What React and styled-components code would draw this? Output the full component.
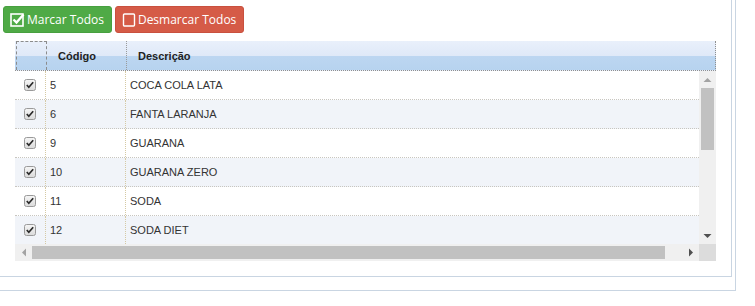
import React from "react";
import styled, { createGlobalStyle } from "styled-components";

const Global = createGlobalStyle`
  html, body { margin: 0; padding: 0; background: #fff; }
  body { font-family: Arial, "Liberation Sans", sans-serif; }
`;

const Outer = styled.div`
  width: 736px;
  height: 291px;
  border-right: 1px solid #c9d5e2;
  border-bottom: 1px solid #c9d5e2;
  box-sizing: border-box;
`;

const Inner = styled.div`
  width: 732px;
  height: 277px;
  border-right: 1px solid #c9d5e2;
  border-bottom: 1px solid #c9d5e2;
  box-sizing: border-box;
  padding: 6px 0 0 3px;
`;

const Toolbar = styled.div`
  display: flex;
  gap: 3px;
  height: 27px;
`;

const Btn = styled.button`
  display: flex;
  align-items: center;
  gap: 2px;
  height: 27px;
  padding: 0 7px 0 6px;
  border: 1px solid ${(p) => p.$border};
  background: ${(p) => p.$bg};
  color: #fff;
  border-radius: 3px;
  font-family: "Open Sans", "Liberation Sans", sans-serif;
  font-size: 12px;
  cursor: pointer;
`;

const Grid = styled.div`
  margin: 8px 0 0 12px;
  width: 701px;
  display: flex;
  flex-direction: column;
`;

const HeaderRow = styled.div`
  display: flex;
  height: 30px;
  box-sizing: border-box;
  border-bottom: 1px dotted #8f8f8f;
  border-right: 1px dotted #8f8f8f;
  background: linear-gradient(#e9f0fb 0%, #dfe9f8 50%, #bcd6f1 53%, #b7d3ef 100%);
`;

const HeadCell = styled.div`
  width: ${(p) => p.$w};
  flex: ${(p) => (p.$grow ? 1 : "none")};
  box-sizing: border-box;
  display: flex;
  align-items: center;
  padding-left: 11px;
  font-size: 11px;
  font-weight: bold;
  color: #222;
  border-right: ${(p) => (p.$sep ? "1px dotted #9a9a9a" : "none")};
`;

const FocusCell = styled.div`
  width: 31px;
  box-sizing: border-box;
  margin-left: 1px;
  border: 1px dashed #8c8c8c;
  border-bottom: none;
`;

const BodyWrap = styled.div`
  display: flex;
  height: 173px;
`;

const Rows = styled.div`
  flex: 1;
  overflow: hidden;
`;

const Row = styled.div`
  display: flex;
  height: 29px;
  box-sizing: border-box;
  border-bottom: 1px dotted #c8c6c0;
  background: ${(p) => (p.$alt ? "#f1f4f9" : "#fff")};
`;

const Cell = styled.div`
  width: ${(p) => p.$w};
  flex: ${(p) => (p.$grow ? 1 : "none")};
  box-sizing: border-box;
  display: flex;
  align-items: center;
  justify-content: ${(p) => (p.$center ? "center" : "flex-start")};
  padding-left: ${(p) => (p.$center ? "0" : "4px")};
  font-size: 11px;
  color: #333;
  border-right: ${(p) => (p.$sep ? "1px dotted #d5c9a4" : "none")};
`;

const VScroll = styled.div`
  width: 17px;
  background: #f0f0f0;
  display: flex;
  flex-direction: column;
  align-items: center;
`;

const ArrowBtn = styled.div`
  width: 17px;
  height: 17px;
  flex: none;
  display: flex;
  align-items: center;
  justify-content: center;
`;

const VThumb = styled.div`
  width: 13px;
  height: 62px;
  background: #c1c1c1;
`;

const Spacer = styled.div`
  flex: 1;
`;

const HScrollRow = styled.div`
  display: flex;
  height: 17px;
`;

const HTrack = styled.div`
  flex: 1;
  display: flex;
  align-items: center;
  background: #f0f0f0;
`;

const HThumb = styled.div`
  width: 633px;
  height: 13px;
  background: #c1c1c1;
`;

const Corner = styled.div`
  width: 17px;
  background: #dcdcdc;
`;

const CheckSquareIcon = () => (
  <svg width="15" height="15" viewBox="0 0 15 15">
    <rect x="1" y="2" width="12" height="12" fill="none" stroke="#fff" strokeWidth="1.6" />
    <path d="M3.5 7.5 L6.5 10.5 L13.5 2.5" fill="none" stroke="#fff" strokeWidth="2.4" />
  </svg>
);

const SquareIcon = () => (
  <svg width="14" height="15" viewBox="0 0 14 15">
    <rect x="1.5" y="2" width="11" height="12" rx="1" fill="none" stroke="#fff" strokeWidth="1.4" />
  </svg>
);

const RowCheck = () => (
  <svg width="12" height="12" viewBox="0 0 12 12">
    <defs>
      <linearGradient id="cbg" x1="0" y1="0" x2="0" y2="1">
        <stop offset="0" stopColor="#f6f6f6" />
        <stop offset="1" stopColor="#dadada" />
      </linearGradient>
    </defs>
    <rect x="0.5" y="0.5" width="11" height="11" rx="2" fill="url(#cbg)" stroke="#9a9a9a" />
    <path d="M2.8 6 L4.8 8.2 L9.2 3.2" fill="none" stroke="#2a2a2a" strokeWidth="1.7" />
  </svg>
);

const Tri = ({ dir, color }) => {
  const pts = {
    up: "0,5 4,1 8,5",
    down: "0,1 8,1 4,5",
    left: "5,0 5,8 1,4",
    right: "1,0 1,8 5,4",
  }[dir];
  const vertical = dir === "up" || dir === "down";
  return (
    <svg width={vertical ? 9 : 6} height={vertical ? 6 : 9} viewBox={vertical ? "0 0 8 6" : "0 0 6 8"}>
      <polygon points={pts} fill={color} />
    </svg>
  );
};

const data = [
  ["5", "COCA COLA LATA"],
  ["6", "FANTA LARANJA"],
  ["9", "GUARANA"],
  ["10", "GUARANA ZERO"],
  ["11", "SODA"],
  ["12", "SODA DIET"],
];

export default function App() {
  return (
    <>
      <Global />
      <Outer>
        <Inner>
          <Toolbar>
            <Btn $bg="#4faa46" $border="#47a03f">
              <CheckSquareIcon />
              Marcar Todos
            </Btn>
            <Btn $bg="#d55b47" $border="#c9503e">
              <SquareIcon />
              Desmarcar Todos
            </Btn>
          </Toolbar>
          <Grid>
            <HeaderRow>
              <FocusCell />
              <HeadCell $w="80px" $sep>Código</HeadCell>
              <HeadCell $grow>Descrição</HeadCell>
            </HeaderRow>
            <BodyWrap>
              <Rows>
                {data.map(([code, desc], i) => (
                  <Row key={code} $alt={i % 2 === 1}>
                    <Cell $w="31px" $center $sep>
                      <RowCheck />
                    </Cell>
                    <Cell $w="80px" $sep>{code}</Cell>
                    <Cell $grow>{desc}</Cell>
                  </Row>
                ))}
              </Rows>
              <VScroll>
                <ArrowBtn>
                  <Tri dir="up" color="#a3a3a3" />
                </ArrowBtn>
                <VThumb />
                <Spacer />
                <ArrowBtn>
                  <Tri dir="down" color="#505050" />
                </ArrowBtn>
              </VScroll>
            </BodyWrap>
            <HScrollRow>
              <HTrack>
                <ArrowBtn>
                  <Tri dir="left" color="#a3a3a3" />
                </ArrowBtn>
                <HThumb />
                <Spacer />
                <ArrowBtn>
                  <Tri dir="right" color="#505050" />
                </ArrowBtn>
              </HTrack>
              <Corner />
            </HScrollRow>
          </Grid>
        </Inner>
      </Outer>
    </>
  );
}
